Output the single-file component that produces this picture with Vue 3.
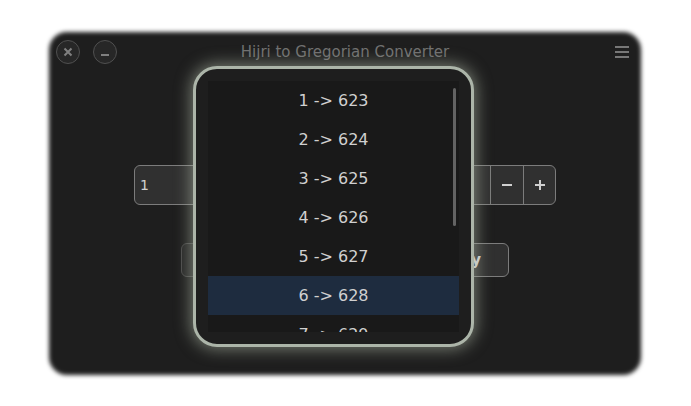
<script setup>
import { ref } from 'vue'

const day = ref('1')
const selected = ref(6)
const years = Array.from({ length: 7 }, (_, i) => ({ hijri: i + 1, gregorian: 623 + i }))
</script>

<template>
  <div class="page">
    <main class="window">
      <header class="titlebar">
        <div class="controls">
          <button class="round" type="button" aria-label="Close">
            <svg width="10" height="10" viewBox="0 0 10 10"><path d="M1.5 1.5 8.5 8.5M8.5 1.5 1.5 8.5" /></svg>
          </button>
          <button class="round" type="button" aria-label="Minimize">
            <svg width="10" height="10" viewBox="0 0 10 10"><path d="M1 8H9" /></svg>
          </button>
        </div>
        <h1>Hijri to Gregorian Converter</h1>
        <button class="menu" type="button" aria-label="Menu">
          <svg width="14" height="12" viewBox="0 0 14 12"><path d="M0 1H14M0 6H14M0 11H14" /></svg>
        </button>
      </header>

      <div class="spin">
        <input v-model="day" type="text" aria-label="Day" />
        <button type="button" aria-label="Decrease">
          <svg width="10" height="10" viewBox="0 0 10 10"><path d="M0 5H10" /></svg>
        </button>
        <button type="button" aria-label="Increase">
          <svg width="10" height="10" viewBox="0 0 10 10"><path d="M0 5H10M5 0V10" /></svg>
        </button>
      </div>

      <div class="actions">
        <button class="action" type="button" disabled aria-label="Convert"></button>
        <button class="action" type="button">Copy</button>
      </div>

      <section class="popup">
        <div class="list" role="listbox" aria-label="Years">
          <button
            v-for="y in years"
            :key="y.hijri"
            type="button"
            role="option"
            :aria-selected="y.hijri === selected"
            :class="['row', { active: y.hijri === selected }]"
            @click="selected = y.hijri"
          >{{ y.hijri }} -&gt; {{ y.gregorian }}</button>
        </div>
        <span class="thumb"></span>
      </section>
    </main>
  </div>
</template>

<style>
body {
  background: #fff;
}
</style>

<style scoped>
.page {
  box-sizing: border-box;
  min-height: 100vh;
  padding: 32px 50px 31px 49px;
  display: flex;
  font-family: "DejaVu Sans", sans-serif;
}
button,
input {
  box-sizing: border-box;
  margin: 0;
  padding: 0;
  border: 0;
  background: none;
  font-family: inherit;
  color: #d0d0d0;
}
svg {
  display: block;
  fill: none;
  stroke: currentColor;
  stroke-width: 2;
}
.window {
  position: relative;
  isolation: isolate;
  flex: 1;
  display: flex;
  flex-direction: column;
  align-items: center;
}
.window::before {
  content: "";
  position: absolute;
  inset: 0;
  z-index: -1;
  border-radius: 18px;
  background: #1e1e1e;
  filter: blur(2px);
}
.titlebar {
  box-sizing: border-box;
  width: 100%;
  padding: 8px 7px 0;
  display: grid;
  grid-template-columns: 1fr auto 1fr;
  align-items: center;
}
.controls {
  display: flex;
  gap: 13px;
}
.round {
  width: 24px;
  height: 24px;
  display: grid;
  place-items: center;
  border: 1px solid #505050;
  border-radius: 50%;
  background: #272727;
  color: #808080;
}
h1 {
  margin: 0;
  font-size: 15px;
  line-height: 24px;
  font-weight: 400;
  color: #707070;
}
.menu {
  justify-self: end;
  padding-right: 5px;
  color: #777;
}
.spin {
  box-sizing: border-box;
  width: 100%;
  max-width: 422px;
  height: 40px;
  margin-top: 101px;
  display: flex;
  border: 1px solid #7c7c7c;
  border-radius: 6px;
  background: #303030;
}
.spin input {
  flex: 1;
  min-width: 0;
  padding-left: 5px;
  font-size: 14px;
}
.spin button {
  width: 33px;
  display: grid;
  place-items: center;
  border-left: 1px solid #7c7c7c;
}
.spin button:last-child {
  width: 32px;
}
.actions {
  margin-top: 38px;
  width: 328px;
  display: flex;
  justify-content: space-between;
}
.action {
  width: 98px;
  height: 34px;
  border: 1px solid #7c7c7c;
  border-radius: 6px;
  background: #303030;
  font-size: 15px;
  font-weight: 700;
}
.action:disabled {
  border-color: #4a4a4a;
  background: #272727;
}
.popup {
  position: absolute;
  top: 34px;
  left: calc(50% - 152px);
  padding: 12px;
  border: 3px solid #acb5a9;
  border-radius: 24px;
  background: #1e1e1e;
  box-shadow: 0 0 16px 2px rgba(176, 186, 168, 0.6);
}
.list {
  width: 251px;
  height: 251px;
  overflow: hidden;
  background: #191919;
}
.row {
  display: block;
  width: 100%;
  height: 39px;
  font-size: 16px;
}
.row.active {
  background: #1e2c3f;
}
.thumb {
  position: absolute;
  top: 19px;
  right: 15px;
  width: 3px;
  height: 138px;
  border-radius: 2px;
  background: #636363;
}
</style>
